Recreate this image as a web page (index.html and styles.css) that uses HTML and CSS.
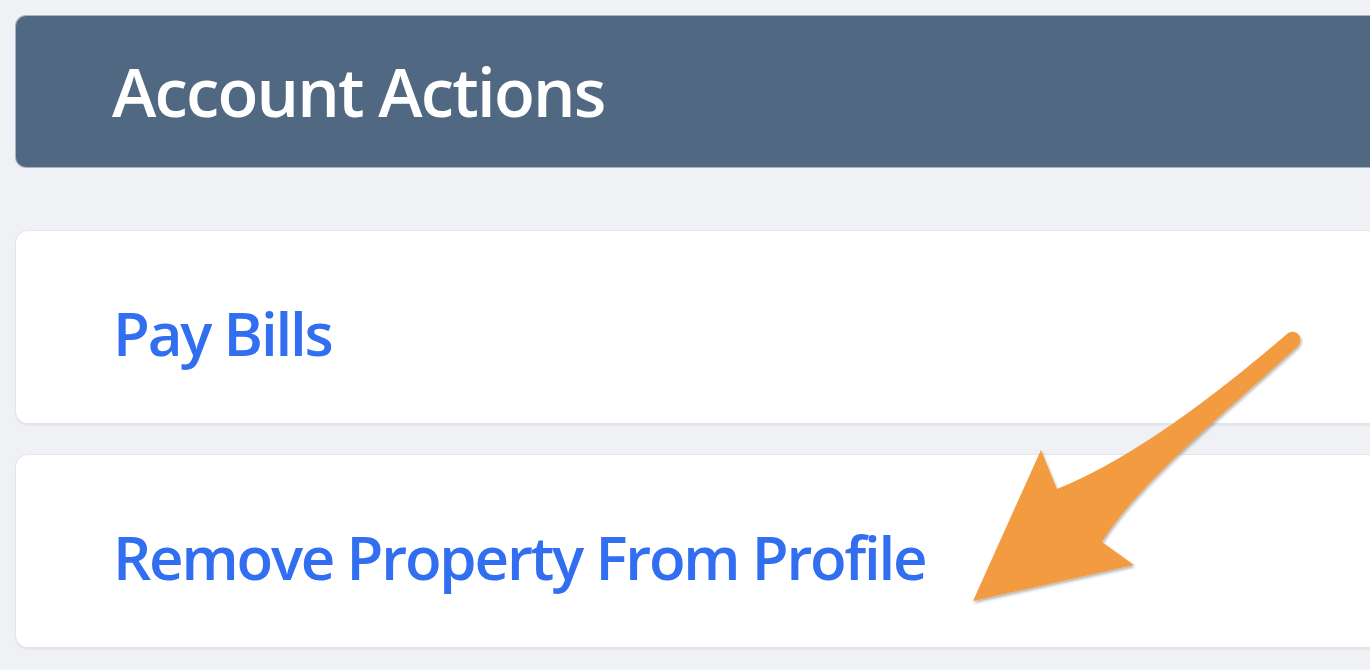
FILE: index.html
```html
<!DOCTYPE html>
<html lang="en">
<head>
<meta charset="utf-8">
<title>Account Actions</title>
<link rel="stylesheet" href="styles.css">
</head>
<body>
<div class="page">
  <div class="header"><h1 class="title">Account Actions</h1></div>
  <div class="actions">
    <a class="card" href="#"><span class="link">Pay Bills</span></a>
    <a class="card" href="#"><span class="link">Remove Property From Profile</span></a>
  </div>
</div>
<svg class="arrow" width="1370" height="670" viewBox="0 0 1370 670" aria-hidden="true">
  <defs>
    <filter id="sh" x="-10%" y="-10%" width="130%" height="130%">
      <feDropShadow dx="1" dy="2" stdDeviation="1.5" flood-color="#000" flood-opacity="0.3"/>
    </filter>
  </defs>
  <path filter="url(#sh)" fill="#f29b3f" d="M1041,450 L1057,489 Q1150,452 1287,334 A7,7 0 0 1 1298,346 C1240,400 1140,480 1102,542 L1134,565 L973,601 Z"/>
</svg>
</body>
</html>
```
FILE: styles.css
```css
html, body {
  margin: 0;
  padding: 0;
}
body {
  background: #eff1f5;
  font-family: "Open Sans", "Noto Sans", sans-serif;
  overflow: hidden;
  width: 1370px;
  height: 670px;
  position: relative;
}
.page {
  width: 1400px;
  padding: 16px 0 0 16px;
  display: flex;
  flex-direction: column;
}
.header {
  height: 151px;
  background: #506882;
  border-radius: 10px;
  box-shadow: 0 0 0 1px rgba(120, 140, 165, 0.6);
  display: flex;
  align-items: center;
  padding-left: 96px;
}
.title {
  margin: 0;
  color: #ffffff;
  font-size: 67px;
  font-weight: 650;
  line-height: 1;
  letter-spacing: -1.8px;
}
.actions {
  margin-top: 64px;
  display: flex;
  flex-direction: column;
  gap: 32px;
}
.card {
  height: 192px;
  background: #ffffff;
  border-radius: 12px;
  box-shadow: 0 0 0 1px #e2e5ea, 0 2px 3px rgba(0, 0, 0, 0.08);
  display: flex;
  align-items: center;
  padding-left: 97px;
  text-decoration: none;
}
.link {
  color: #326ef0;
  font-size: 60px;
  font-weight: 650;
  line-height: 1;
  padding-top: 12px;
  letter-spacing: -2.2px;
}
.arrow {
  position: absolute;
  top: 0;
  left: 0;
  pointer-events: none;
}
```
